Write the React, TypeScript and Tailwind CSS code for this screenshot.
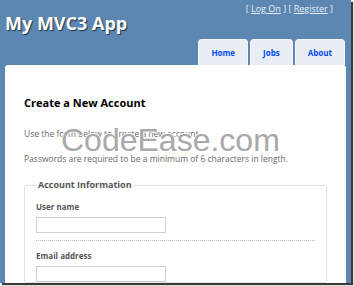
const tabs = ["Home", "Jobs", "About"];

export default function App() {
  return (
    <div className="h-[286px] w-[354px] overflow-hidden bg-white font-['Open_Sans',sans-serif]">
      <div className="relative flex h-[283px] w-[351px] flex-col bg-[#5c87b2] shadow-[2px_2px_1px_#3a3a3a]">
        <header className="flex h-[65px] shrink-0 justify-between pl-[5px] pr-[6px]">
          <h1 className="mt-[12px] text-[18px] font-bold leading-[22px] text-white [text-shadow:1px_1px_1px_#1f3347]">
            My MVC3 App
          </h1>
          <div className="flex flex-col items-end justify-between">
            <div className="mt-[3px] pr-[12px] text-[9px] leading-[12px] text-[#e8eef4]">
              [ <a className="underline">Log On</a> ] [ <a className="underline">Register</a> ]
            </div>
            <nav className="flex gap-[2px]">
              {tabs.map((t) => (
                <a
                  key={t}
                  className="flex h-[26px] items-center rounded-t-[4px] border border-b-0 border-[#f4f7fa] bg-[#e8eef4] px-[12px] text-[8px] font-bold text-[#034af3]"
                >
                  {t}
                </a>
              ))}
            </nav>
          </div>
        </header>

        <main className="mx-[5px] flex-1 rounded-t-[3px] bg-white px-[19px] pt-[31px] text-[#696969]">
          <h2 className="text-[11px] font-bold leading-[14px] text-black">Create a New Account</h2>
          <p className="mt-[18px] text-[8.5px] leading-[11px]">Use the form below to create a new account.</p>
          <p className="mt-[14px] text-[8.5px] leading-[11px]">
            Passwords are required to be a minimum of 6 characters in length.
          </p>

          <fieldset className="mt-[15px] rounded-[2px] border border-[#e2e2e2] px-[11px]">
            <legend className="px-[2px] text-[9px] font-bold leading-[12px] text-[#555]">Account Information</legend>
            <div className="mt-[10px] text-[8px] font-bold leading-[11px] text-[#555]">User name</div>
            <div className="mt-[5px] h-[16px] w-[130px] border border-[#cfcfcf]"></div>
            <div className="mt-[7px] border-t border-dotted border-[#bbb]"></div>
            <div className="mt-[9px] text-[8px] font-bold leading-[11px] text-[#555]">Email address</div>
            <div className="mt-[5px] h-[16px] w-[130px] border border-[#cfcfcf]"></div>
          </fieldset>
        </main>

        <div className="absolute left-[61px] top-[124px] font-['Liberation_Sans',sans-serif] text-[32px] leading-[32px] text-[#a9a9a9] [text-shadow:1px_0_0_#fff,-1px_0_0_#fff,0_1px_0_#fff,0_-1px_0_#fff]">
          CodeEase.com
        </div>
      </div>
    </div>
  );
}
